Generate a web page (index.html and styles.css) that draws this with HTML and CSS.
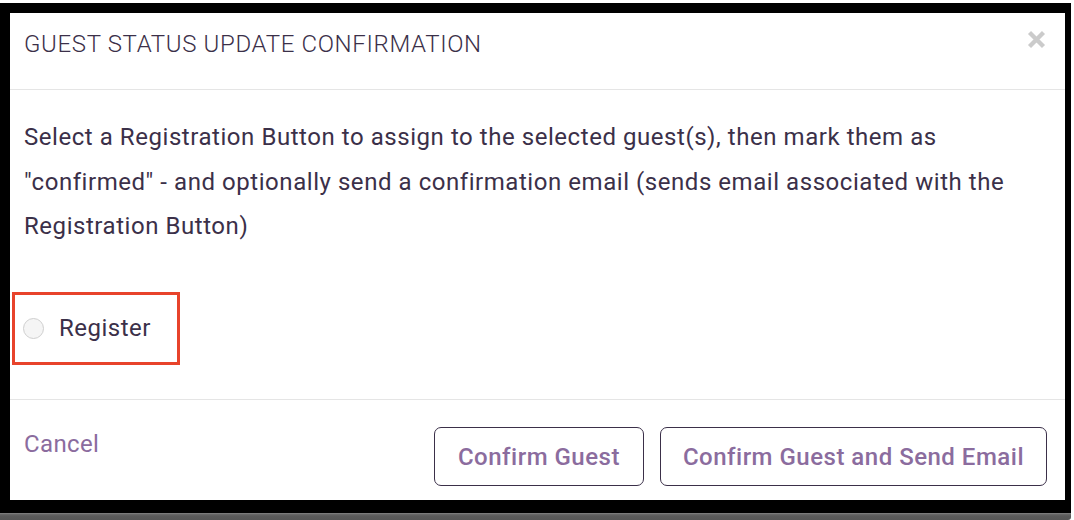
FILE: index.html
```html
<!DOCTYPE html>
<html>
<head>
<meta charset="utf-8">
<link rel="stylesheet" href="styles.css">
</head>
<body>
<div class="frame">
  <div class="modal">
    <div class="modal-header">
      <h4 class="modal-title">GUEST STATUS UPDATE CONFIRMATION</h4>
      <button class="close" aria-label="Close">
        <svg width="19" height="19" viewBox="0 0 19 19"><path d="M2.5 2.5 L16.5 16.5 M16.5 2.5 L2.5 16.5" stroke="#cbcbcb" stroke-width="4.3" stroke-linecap="butt"/></svg>
      </button>
    </div>
    <div class="modal-body">
      <p class="intro">Select a Registration Button to assign to the selected guest(s), then mark them as "confirmed" - and optionally send a confirmation email (sends email associated with the Registration Button)</p>
      <label class="choice">
        <span class="radio"></span>
        <span class="choice-text">Register</span>
      </label>
    </div>
    <div class="modal-footer">
      <a class="cancel" href="#">Cancel</a>
      <div class="actions">
        <button class="btn">Confirm Guest</button>
        <button class="btn">Confirm Guest and Send Email</button>
      </div>
    </div>
  </div>
</div>
<div class="shade"></div>
</body>
</html>
```
FILE: styles.css
```css
html, body {
  margin: 0;
  padding: 0;
  background: #ffffff;
}
body {
  width: 1074px;
  height: 520px;
  overflow: hidden;
  font-family: Roboto, "Liberation Sans", sans-serif;
  color: #3b3049;
}
.frame {
  margin-top: 3px;
  width: 1071px;
  height: 510px;
  box-sizing: border-box;
  background: #000;
  padding: 10px 6px 13px 10px;
}
.shade {
  width: 1071px;
  height: 7px;
  background: linear-gradient(#8a8a8a 0, #6a6a6a 1px, #5a5a5a 3px, #565656 100%);
  border-bottom-right-radius: 3px;
}
.modal {
  background: #fff;
  height: 487px;
  display: flex;
  flex-direction: column;
}
.modal-header {
  height: 76px;
  border-bottom: 1px solid #e5e5e5;
  display: flex;
  align-items: flex-start;
  justify-content: space-between;
  padding: 0 19px 0 14px;
}
.modal-title {
  margin: 17px 0 0 0;
  font-size: 24px;
  line-height: 29px;
  font-weight: 300;
  letter-spacing: 0.65px;
  color: #3b3049;
}
.close {
  margin-top: 17px;
  padding: 0;
  border: 0;
  background: none;
  width: 19px;
  height: 19px;
  display: block;
}
.close svg { display: block; }
.modal-body {
  height: 310px;
  border-bottom: 1px solid #e5e5e5;
  padding: 25px 14px 0 14px;
  box-sizing: border-box;
}
.intro {
  margin: 0;
  font-size: 24px;
  line-height: 44.5px;
  letter-spacing: 0.55px;
  color: #3b3049;
}
.choice {
  margin: 43px 0 0 -12px;
  display: inline-flex;
  align-items: center;
  width: 168px;
  height: 73px;
  box-sizing: border-box;
  border: 3px solid #e8432b;
  padding-left: 8px;
}
.radio {
  width: 21px;
  height: 21px;
  box-sizing: border-box;
  border: 1px solid #cfcfcf;
  border-radius: 50%;
  background: #f5f5f5;
  margin-top: 1px;
}
.choice-text {
  margin-left: 15px;
  font-size: 24px;
  letter-spacing: 0.5px;
  color: #3b3049;
}
.modal-footer {
  flex: 1;
  display: flex;
  justify-content: space-between;
  align-items: flex-start;
  padding: 27px 18px 0 14px;
}
.cancel {
  margin-top: 3px;
  font-size: 24px;
  line-height: 28px;
  letter-spacing: 0.35px;
  color: #8b6c9e;
  text-decoration: none;
}
.actions {
  display: flex;
  gap: 16px;
}
.btn {
  height: 59px;
  box-sizing: border-box;
  border: 1px solid #3b3049;
  border-radius: 7px;
  background: #fff;
  padding: 0 22px;
  font-family: Roboto, "Liberation Sans", sans-serif;
  font-size: 24px;
  font-weight: 500;
  letter-spacing: 0.5px;
  color: #8b6c9e;
}
.btn:first-child {
  padding: 0 23px;
}
```
